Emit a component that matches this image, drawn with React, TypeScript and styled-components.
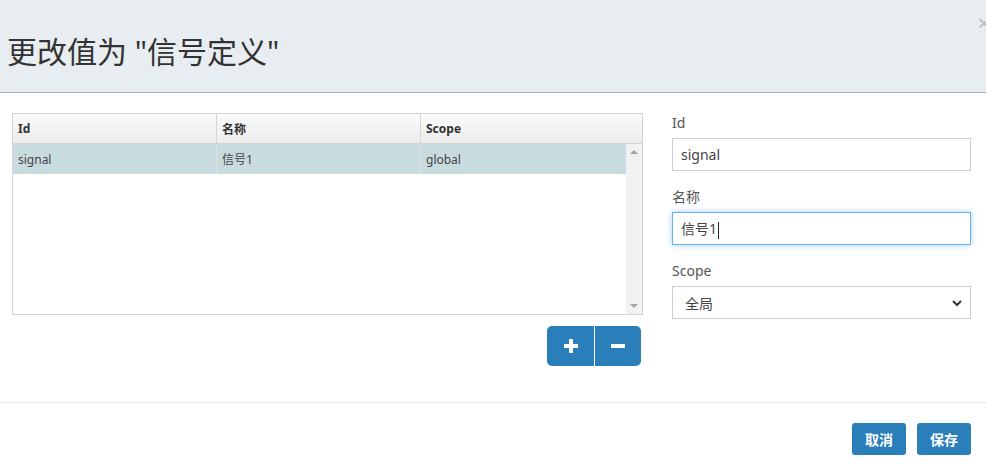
import styled, { createGlobalStyle } from 'styled-components'

const GlobalStyle = createGlobalStyle`
  html, body {
    margin: 0;
    padding: 0;
    background: #ffffff;
  }
  body {
    font-family: "Noto Sans", "Noto Sans CJK SC", sans-serif;
    color: #333333;
  }
`

const Dialog = styled.div`
  width: 986px;
  height: 470px;
  overflow: hidden;
  display: flex;
  flex-direction: column;
`

const Header = styled.div`
  position: relative;
  height: 93px;
  background: #e8edf1;
  border-bottom: 1px solid #a9b3c1;
  display: flex;
  align-items: center;
  padding: 8px 0 0 7px;
  box-sizing: border-box;
`

const Title = styled.h1`
  margin: 0;
  font-size: 30px;
  font-weight: 400;
  color: #333333;
  font-family: "Noto Sans", "Noto Sans CJK SC", sans-serif;
`

const Close = styled.span`
  position: absolute;
  right: -4px;
  top: 11px;
  font-size: 22px;
  color: #b9bcc0;
  line-height: 1;
`

const Body = styled.div`
  height: 310px;
  display: flex;
  gap: 29px;
  padding: 20px 15px 0 12px;
  box-sizing: border-box;
  border-bottom: 1px solid #e5e5e5;
`

const LeftColumn = styled.div`
  width: 631px;
  display: flex;
  flex-direction: column;
`

const Grid = styled.div`
  height: 202px;
  border: 1px solid #d4d4d4;
  box-sizing: border-box;
  display: flex;
  flex-direction: column;
  font-size: 12px;
`

const HeadRow = styled.div`
  display: grid;
  grid-template-columns: 204px 204px 1fr;
  height: 29px;
  background: linear-gradient(#fbfbfb, #ebebeb);
  border-bottom: 1px solid #d4d4d4;
`

const HeadCell = styled.div<{ last?: boolean }>`
  display: flex;
  align-items: center;
  padding-left: 5px;
  font-weight: 700;
  color: #333333;
  border-right: 1px solid ${(p) => (p.last ? 'transparent' : '#d4d4d4')};
`

const GridBody = styled.div`
  flex: 1;
  display: flex;
`

const Rows = styled.div`
  flex: 1;
`

const Row = styled.div<{ selected?: boolean }>`
  display: grid;
  grid-template-columns: 204px 204px 1fr;
  height: 30px;
  background: ${(p) => (p.selected ? '#c8dce0' : 'transparent')};
`

const Cell = styled.div`
  display: flex;
  align-items: center;
  padding-left: 5px;
  color: #444444;
  border-right: 1px solid #d9e3e6;
  &:last-child {
    border-right: none;
  }
`

const Scrollbar = styled.div`
  width: 16px;
  background: #f1f1f1;
  display: flex;
  flex-direction: column;
  justify-content: space-between;
  align-items: center;
  padding: 6px 0;
  box-sizing: border-box;
`

const Arrow = styled.span<{ down?: boolean }>`
  width: 0;
  height: 0;
  border-left: 4px solid transparent;
  border-right: 4px solid transparent;
  ${(p) => (p.down ? 'border-top: 4px solid #a3a3a3;' : 'border-bottom: 4px solid #a3a3a3;')}
`

const ToolGroup = styled.div`
  align-self: flex-end;
  margin: 11px 2px 0 0;
  display: flex;
  border-radius: 5px;
  overflow: hidden;
`

const ToolButton = styled.button`
  width: 47px;
  height: 40px;
  border: none;
  background: #2a7fbb;
  color: #ffffff;
  display: flex;
  align-items: center;
  justify-content: center;
  padding: 0;
  & + & {
    border-left: 1px solid #ffffff;
  }
`

const Form = styled.div`
  width: 299px;
  display: flex;
  flex-direction: column;
  gap: 16px;
`

const Group = styled.div`
  display: flex;
  flex-direction: column;
`

const Label = styled.label`
  font-size: 14px;
  line-height: 20px;
  color: #555555;
  margin-bottom: 5px;
`

const Field = styled.div<{ focused?: boolean }>`
  height: 33px;
  box-sizing: border-box;
  border: 1px solid ${(p) => (p.focused ? '#66afe9' : '#cccccc')};
  box-shadow: ${(p) => (p.focused ? '0 0 6px rgba(102,175,233,0.6)' : 'none')};
  display: flex;
  align-items: center;
  justify-content: space-between;
  padding: 0 8px;
  font-size: 14px;
  color: #444444;
`

const Caret = styled.span`
  display: inline-block;
  width: 1px;
  height: 17px;
  background: #222222;
  vertical-align: middle;
  margin-left: 1px;
`

const SelectText = styled.span`
  padding-left: 4px;
`

const Footer = styled.div`
  display: flex;
  justify-content: flex-end;
  gap: 11px;
  padding: 20px 15px 0 0;
`

const ActionButton = styled.button`
  height: 32px;
  padding: 0 13px;
  border: none;
  border-radius: 3px;
  background: #2a7fbb;
  color: #ffffff;
  font-size: 14px;
  font-weight: 700;
  font-family: "Noto Sans", "Noto Sans CJK SC", sans-serif;
`

const Plus = () => (
  <svg width="14" height="14" viewBox="0 0 14 14">
    <rect x="5" y="0" width="4" height="14" fill="#fff" />
    <rect x="0" y="5" width="14" height="4" fill="#fff" />
  </svg>
)

const Minus = () => (
  <svg width="14" height="14" viewBox="0 0 14 14">
    <rect x="0" y="5" width="14" height="4" fill="#fff" />
  </svg>
)

const Chevron = () => (
  <svg width="10" height="8" viewBox="0 0 10 8">
    <path d="M1 2 L5 6 L9 2" stroke="#333" strokeWidth="2" fill="none" />
  </svg>
)

const App = () => {
  return (
    <Dialog>
      <GlobalStyle />
      <Header>
        <Title>更改值为 "信号定义"</Title>
        <Close>×</Close>
      </Header>
      <Body>
        <LeftColumn>
          <Grid>
            <HeadRow>
              <HeadCell>Id</HeadCell>
              <HeadCell>名称</HeadCell>
              <HeadCell last>Scope</HeadCell>
            </HeadRow>
            <GridBody>
              <Rows>
                <Row selected>
                  <Cell>signal</Cell>
                  <Cell>信号1</Cell>
                  <Cell>global</Cell>
                </Row>
              </Rows>
              <Scrollbar>
                <Arrow />
                <Arrow down />
              </Scrollbar>
            </GridBody>
          </Grid>
          <ToolGroup>
            <ToolButton>
              <Plus />
            </ToolButton>
            <ToolButton>
              <Minus />
            </ToolButton>
          </ToolGroup>
        </LeftColumn>
        <Form>
          <Group>
            <Label>Id</Label>
            <Field>signal</Field>
          </Group>
          <Group>
            <Label>名称</Label>
            <Field focused>
              <span>
                信号1
                <Caret />
              </span>
            </Field>
          </Group>
          <Group>
            <Label>Scope</Label>
            <Field>
              <SelectText>全局</SelectText>
              <Chevron />
            </Field>
          </Group>
        </Form>
      </Body>
      <Footer>
        <ActionButton>取消</ActionButton>
        <ActionButton>保存</ActionButton>
      </Footer>
    </Dialog>
  )
}

export default App
